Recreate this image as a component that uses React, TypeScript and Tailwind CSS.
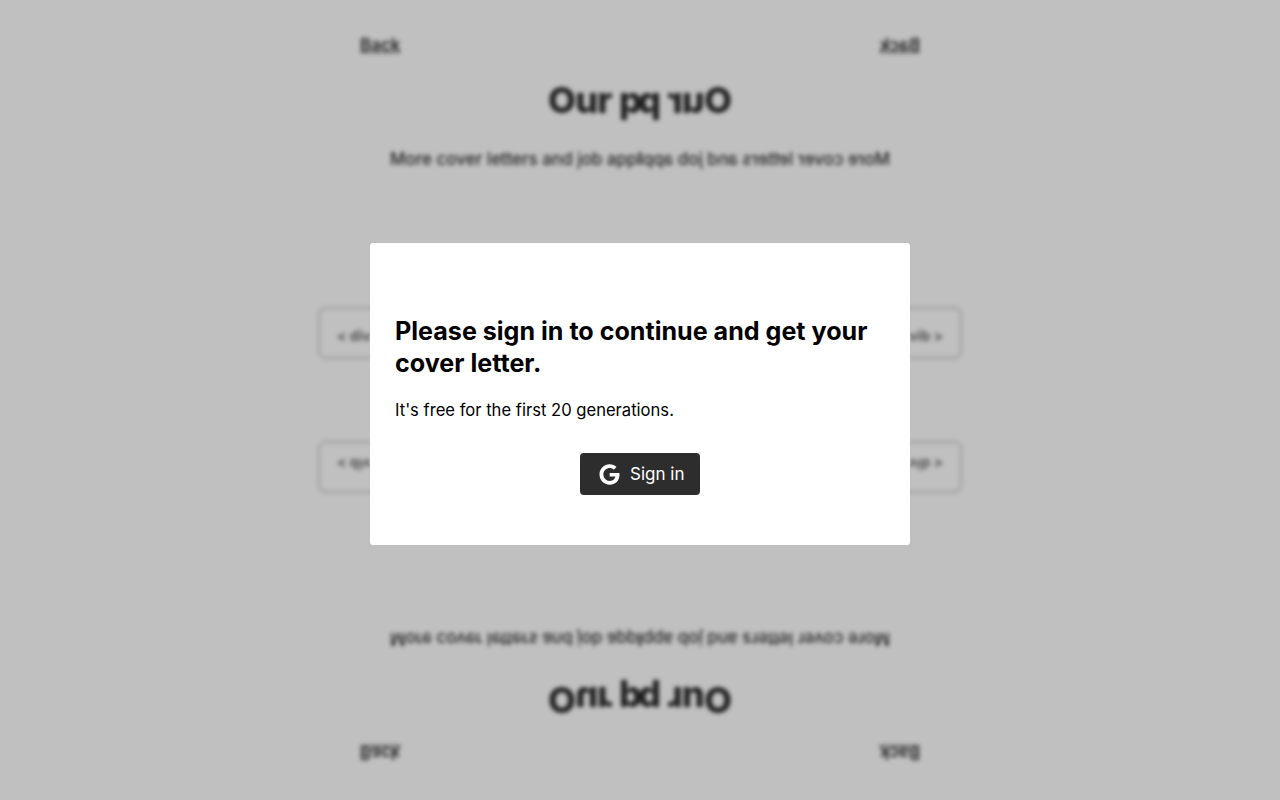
import { FaGoogle } from "react-icons/fa";

// One quarter of the backdrop, the other three are this one flipped
function BackdropQuarter({ lower }: { lower?: boolean }) {
  return (
    <div className="flex h-[400px] w-[640px] flex-col text-[#222222]">
      <a className={`ml-[360px] text-[17px] font-semibold leading-[20px] underline ${lower ? "mt-[37px]" : "mt-[35px]"}`}>
        Back
      </a>
      <h1
        className={`ml-[548px] whitespace-nowrap text-[36px] font-extrabold leading-[40px] tracking-[-0.7px] ${
          lower ? "mt-[23px]" : "mt-[25px]"
        }`}
      >
        Our p
      </h1>
      <p
        className={`ml-[390px] whitespace-nowrap text-[17px] font-medium leading-[20px] ${
          lower ? "mt-[31px]" : "mt-[29px]"
        }`}
      >
        More cover letters and job appli
      </p>
      <div
        className={`ml-[317px] flex h-[54px] w-[400px] items-center rounded-[9px] border-[4px] border-[#adadad] pl-[16px] pt-[4px] text-[14px] font-bold text-[#555555] ${
          lower ? "mt-[135px]" : "mt-[137px]"
        }`}
      >
        &lt; div
      </div>
    </div>
  );
}

function Quarter({ flip, lower }: { flip: string; lower?: boolean }) {
  return (
    <div className="h-[400px] w-[640px] overflow-hidden">
      <div className={flip}>
        <BackdropQuarter lower={lower} />
      </div>
    </div>
  );
}

export default function App() {
  return (
    <div className="relative h-[800px] w-[1280px] overflow-hidden bg-[#c0c0c0] font-['Inter',sans-serif]">
      <div className="grid grid-cols-2 blur-[2px]">
        <Quarter flip="" />
        <Quarter flip="-scale-x-100" />
        <Quarter flip="-scale-y-100" lower />
        <Quarter flip="-scale-x-100 -scale-y-100" lower />
      </div>

      {/* Sign in dialog */}
      <div className="absolute inset-0 flex items-center justify-center pb-3">
        <div className="w-[540px] rounded-[3px] bg-white px-[25px] pb-[50px] pt-[73px] text-black">
          <h2 className="text-[25.1px] font-bold leading-[31.5px]">
            Please sign in to continue and get your cover letter.
          </h2>
          <p className="mt-[19px] text-[16.6px] leading-[24px]">It's free for the first 20 generations.</p>
          <div className="mt-[31px] flex justify-center">
            <button className="flex h-[42px] w-[120px] items-center gap-[10px] rounded-[4px] bg-[#2d2d2d] pl-[19px] text-[17px] text-white">
              <FaGoogle className="h-[21px] w-[21px]" />
              <span className="pt-[2px]">Sign in</span>
            </button>
          </div>
        </div>
      </div>
    </div>
  );
}
